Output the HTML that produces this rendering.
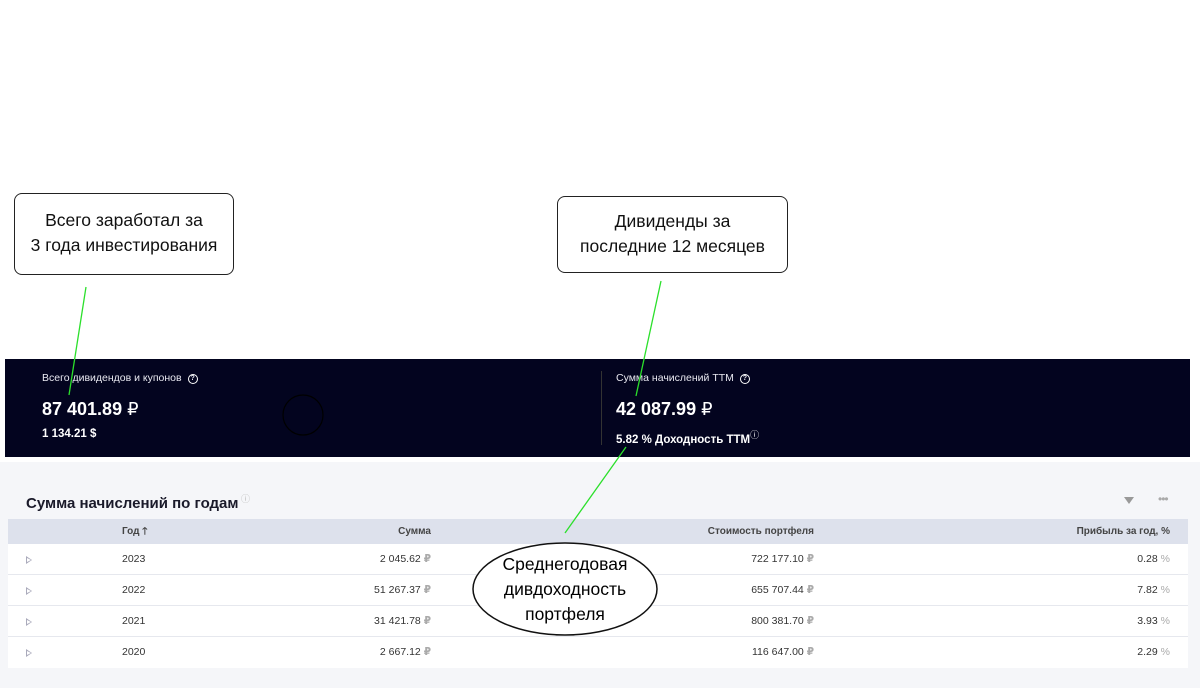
<!DOCTYPE html>
<html><head><meta charset="utf-8"><style>
*{margin:0;padding:0;box-sizing:border-box}
body{width:1200px;height:699px;background:#fff;position:relative;overflow:hidden;font-family:"Liberation Sans","DejaVu Sans",sans-serif}
.abs{position:absolute}
.dark{left:5px;top:359px;width:1185px;height:98px;background:#03041f;color:#fff}
.lbl{font-size:10.5px;color:#e8e8f0}
.q{display:inline-block;width:10px;height:10px;border:1.3px solid #fff;border-radius:50%;font-size:7px;text-align:center;line-height:8px;font-weight:bold;vertical-align:1px;margin-left:6px}
.big{font-size:18px;font-weight:bold}
.sm{font-size:11.5px;font-weight:bold}
.gray{left:0;top:462px;width:1200px;height:226px;background:#f5f6f9}
.th{left:8px;top:519px;width:1180px;height:25px;background:#dde1ec;font-size:10px;color:#444;font-weight:bold}
.row{left:8px;width:1180px;height:31px;background:#fff;border-bottom:1px solid #e6e8ee;font-size:10.5px;color:#333}
.row span,.th span{position:absolute;top:0;line-height:31px}
.th span{line-height:25px}
.r{color:#aaa}
.tri{width:0;height:0;border-left:6px solid #aab;border-top:4px solid transparent;border-bottom:4px solid transparent;top:12px!important}
.tri:after{content:"";position:absolute;left:-5px;top:-2.5px;border-left:4px solid #fff;border-top:2.5px solid transparent;border-bottom:2.5px solid transparent}
.box{border:1.5px solid #222;border-radius:8px;background:#fff;font-size:17.5px;text-align:center;line-height:25px;color:#111;padding-top:14px}
</style></head><body>
<div class="abs dark">
 <div class="abs lbl" style="left:37px;top:13px">Всего дивидендов и купонов<span class="q">?</span></div>
 <div class="abs big" style="left:37px;top:40px">87 401.89 <span style="font-weight:normal">₽</span></div>
 <div class="abs sm" style="left:37px;top:69px">1 134.21 $</div>
 <div class="abs" style="left:596px;top:12px;width:1px;height:74px;background:#333"></div>
 <div class="abs lbl" style="left:611px;top:13px">Сумма начислений TTM<span class="q">?</span></div>
 <div class="abs big" style="left:611px;top:40px">42 087.99 <span style="font-weight:normal">₽</span></div>
 <div class="abs sm" style="left:611px;top:69px">5.82 % Доходность TTM<sup style="font-size:9px;font-weight:normal">ⓘ</sup></div>
</div>
<div class="abs gray"></div>
<div class="abs" style="left:26px;top:492px;font-size:15px;font-weight:bold;color:#1a1a2a">Сумма начислений по годам<sup style="font-size:9px;color:#bbb;font-weight:normal"> ⓘ</sup></div>
<div class="abs" style="left:1124px;top:497px;border-top:7px solid #999;border-left:5px solid transparent;border-right:5px solid transparent"></div>
<div class="abs" style="left:1158px;top:492px;font-size:12px;color:#aaa;letter-spacing:-1px">•••</div>
<div class="abs th"><span style="left:114px">Год 🡑</span><span style="right:757px">Сумма</span><span style="right:374px">Стоимость портфеля</span><span style="right:18px">Прибыль за год, %</span></div>
<div class="abs row" style="top:544px"><span class="tri" style="left:18px"></span><span style="left:114px">2023</span><span style="right:757px">2 045.62 <b class="r">₽</b></span><span style="right:374px">722 177.10 <b class="r">₽</b></span><span style="right:18px">0.28 <i class="r" style="font-style:normal">%</i></span></div>
<div class="abs row" style="top:575px"><span class="tri" style="left:18px"></span><span style="left:114px">2022</span><span style="right:757px">51 267.37 <b class="r">₽</b></span><span style="right:374px">655 707.44 <b class="r">₽</b></span><span style="right:18px">7.82 <i class="r" style="font-style:normal">%</i></span></div>
<div class="abs row" style="top:606px"><span class="tri" style="left:18px"></span><span style="left:114px">2021</span><span style="right:757px">31 421.78 <b class="r">₽</b></span><span style="right:374px">800 381.70 <b class="r">₽</b></span><span style="right:18px">3.93 <i class="r" style="font-style:normal">%</i></span></div>
<div class="abs row" style="top:637px;border-bottom:none"><span class="tri" style="left:18px"></span><span style="left:114px">2020</span><span style="right:757px">2 667.12 <b class="r">₽</b></span><span style="right:374px">116 647.00 <b class="r">₽</b></span><span style="right:18px">2.29 <i class="r" style="font-style:normal">%</i></span></div>

<div class="abs box" style="left:14px;top:193px;width:220px;height:82px">Всего заработал за<br>3 года инвестирования</div>
<div class="abs box" style="left:557px;top:196px;width:231px;height:77px;padding-top:12px">Дивиденды за<br>последние 12 месяцев</div>
<svg class="abs" style="left:0;top:0" width="1200" height="699">
 <line x1="86" y1="287" x2="69" y2="395" stroke="#2be02b" stroke-width="1.3"/>
 <line x1="661" y1="281" x2="636" y2="396" stroke="#2be02b" stroke-width="1.3"/>
 <line x1="626" y1="447" x2="565" y2="533" stroke="#2be02b" stroke-width="1.3"/>
 <circle cx="303" cy="415" r="20" fill="none" stroke="#000" stroke-width="1.2"/>
 <ellipse cx="565" cy="589" rx="92" ry="46" fill="#fff" stroke="#111" stroke-width="1.5"/>
 <text x="565" y="570" font-size="17.5" text-anchor="middle" font-family="Liberation Sans, sans-serif">Среднегодовая</text>
 <text x="565" y="595" font-size="17.5" text-anchor="middle" font-family="Liberation Sans, sans-serif">дивдоходность</text>
 <text x="565" y="620" font-size="17.5" text-anchor="middle" font-family="Liberation Sans, sans-serif">портфеля</text>
</svg>
</body></html>
